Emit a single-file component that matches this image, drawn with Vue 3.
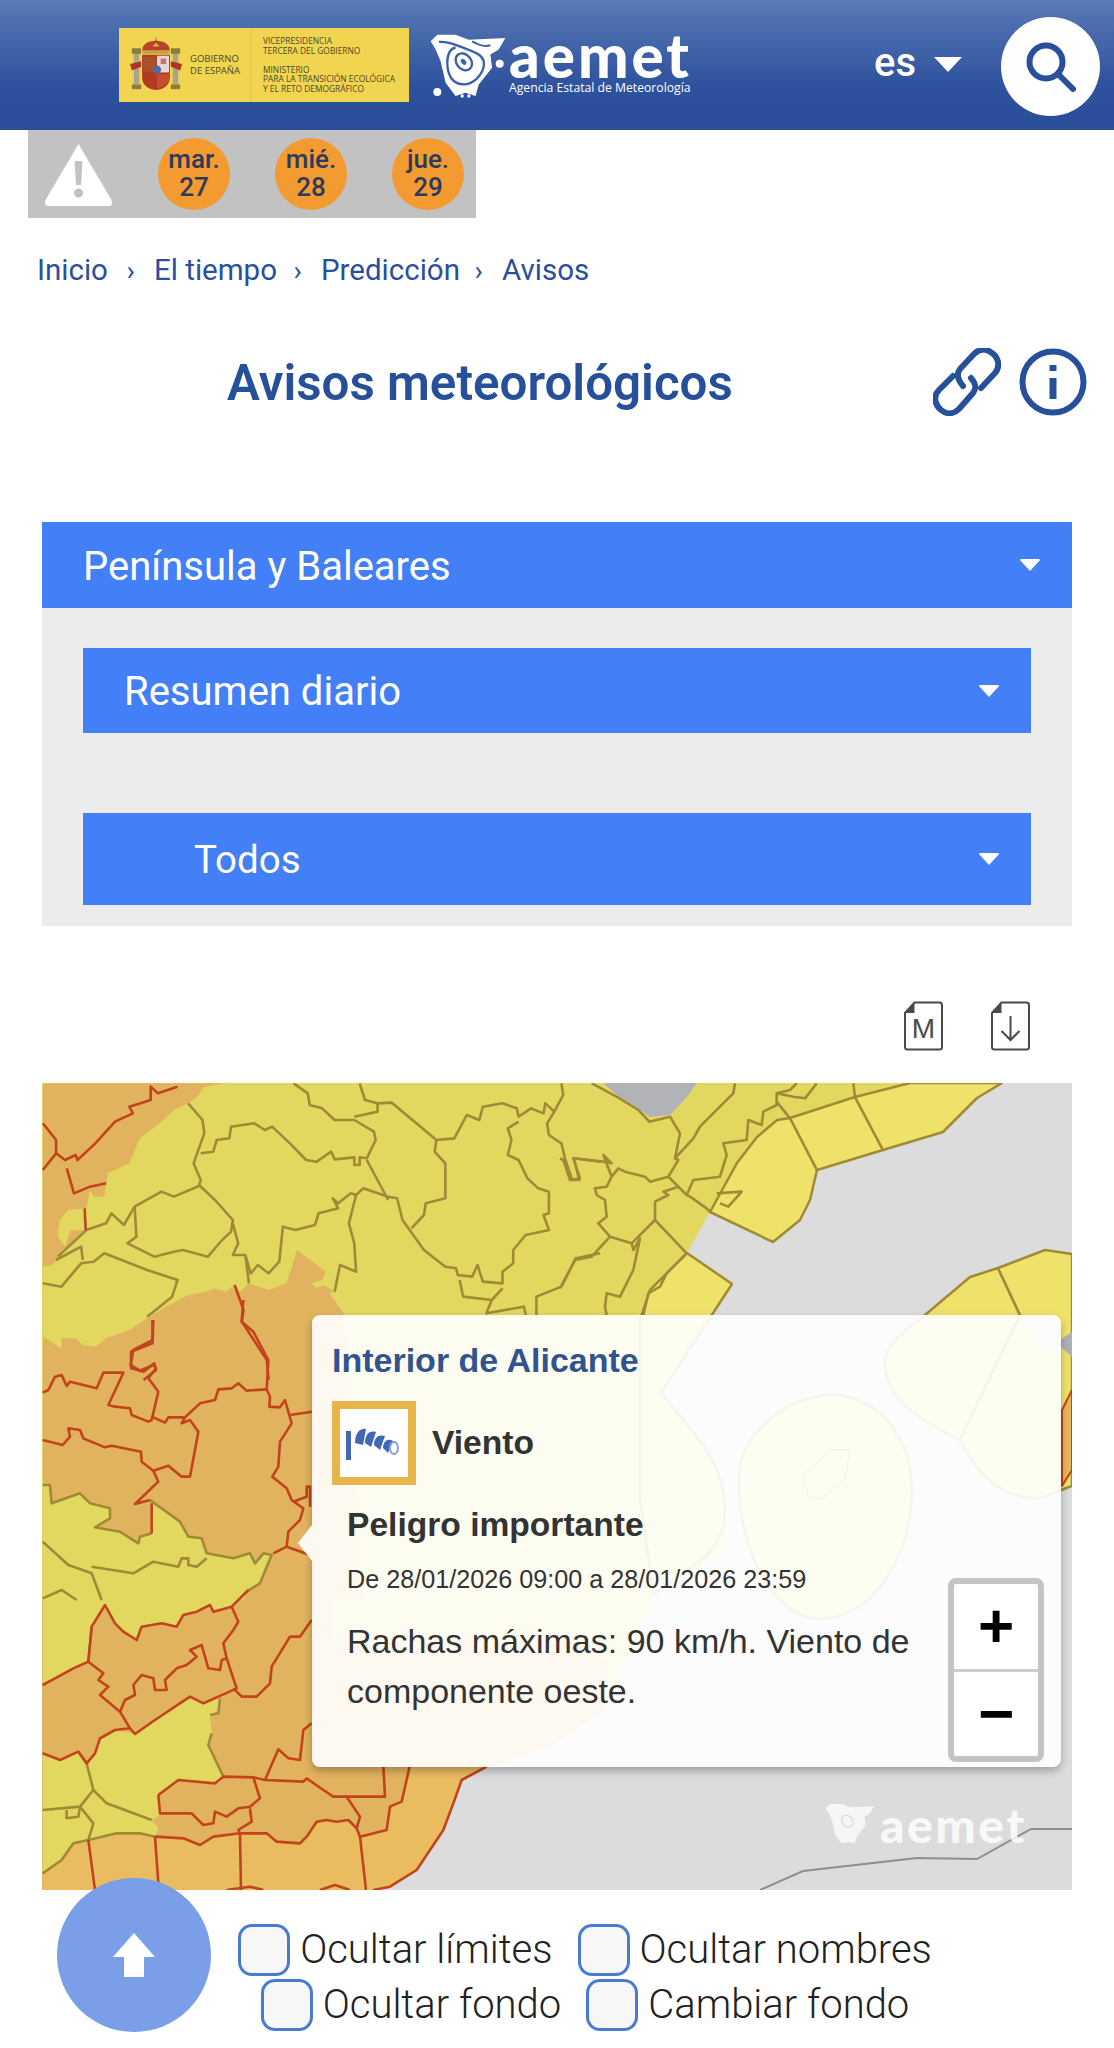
<script setup>
const days = [
  { d: 'mar.', n: '27' },
  { d: 'mié.', n: '28' },
  { d: 'jue.', n: '29' }
]
const crumbs = [
  { t: 'Inicio', w: 117 },
  { t: 'El tiempo', w: 167 },
  { t: 'Predicción', w: 181 },
  { t: 'Avisos', w: 90 }
]

// Map shapes, traced per reference crop. Each group has its own local coordinates.
const t8 = 'translate(40 1080) scale(0.35714 0.33333)'
const t9 = 'translate(560 1080) scale(0.33333)'
const t10 = 'translate(40 1300) scale(0.33333)'
const t11 = 'translate(40 1590) scale(0.33333)'

const orange8 = [
  '8,10 520,10 460,20 440,50 415,70 375,90 340,125 280,175 250,250 190,280 180,350 150,350 140,330 130,385 80,390 55,420 50,470 70,500 85,450 125,450 60,520 35,555 8,560',
  '8,770 60,805 60,775 100,775 120,795 155,800 185,775 250,750 300,715 345,685 415,645 465,635 490,625 520,635 545,615 560,635 585,610 640,630 690,610 720,510 800,575 790,600 760,610 775,625 795,615 825,635 810,640 850,700 900,1560 8,1560'
]
const red8 = [
  '8,130 45,180 45,220 8,270',
  '45,220 70,240 100,225 105,240 155,190 210,125 260,100 250,80 310,60 310,20 330,40 385,20',
  '75,265 95,340 140,320 185,310',
  '125,385 128,450',
  '315,720 315,790 255,815 255,865 290,875 320,850 325,870 290,900',
  '545,615 570,690 565,725 635,840 640,900'
]
const olive8 = [
  '450,220 485,215 495,180 530,175 535,140 600,130 630,150 650,140 700,190 745,240 775,245 815,215 825,238 880,232 880,255 895,255 895,232 915,235 940,180 935,155 880,120 825,120 790,85 755,75 750,40 710,10',
  '415,70 455,120 460,160 430,250 450,300 445,318 375,350 340,335 265,380 235,435 200,400 185,430 130,450 50,530',
  '265,380 270,470 245,490 320,530 375,515 400,510 470,530 510,480 535,455 540,420 490,360 445,315',
  '880,110 945,95 945,70 910,60 895,10',
  '945,70 985,68 1110,180 1160,175 1195,105 1230,120 1240,80 1295,70 1335,85 1340,110 1375,85 1410,100 1415,70 1440,95 1465,45 1460,10',
  '1440,95 1420,130 1425,165 1460,190 1470,235 1490,300 1510,300 1495,235 1568,245',
  '1340,125 1310,145 1320,180 1310,225 1340,240 1365,295 1395,325 1425,335 1425,400 1410,405 1425,450 1360,465 1325,510 1325,550 1295,575 1295,610 1240,605 1225,555 1210,590 1170,585 1165,565 1135,560 1075,510 1015,420 1000,355 975,350 905,325 885,345 870,340 835,370 820,355 835,385 780,400 770,435 715,450 680,440 670,545 640,580 610,555 590,580 575,525 540,525 555,490 540,430',
  '1110,180 1105,215 1135,250 1135,355 1080,370 1075,405 1040,445',
  '915,240 975,360',
  '885,345 865,430 880,490 885,575 840,555 825,635',
  '1175,600 1185,650 1265,660 1295,625',
  '1265,660 1250,700 1355,680 1360,705',
  '1390,705 1390,650 1460,620 1500,535 1568,520',
  '575,525 585,610',
  '8,610 60,620 115,550 150,545 180,520 300,570 385,600 370,650 300,710',
  '120,540 115,500 45,540'
]
const olive9 = [
  '95,10 170,50 235,90 268,125 330,110 360,160 345,235 355,240 325,290 270,305 255,290 195,275 175,265 155,290 140,320 105,325 110,345 135,360 140,410 115,430 150,470 215,490 220,510 240,475 220,570 180,650 140,640 135,680 140,705',
  '155,290 130,225 155,250 130,245 40,235 60,295 30,300 10,240 0,235',
  '150,470 95,530 45,540 0,625',
  '345,235 400,175 420,140 495,65 520,40 525,10',
  '325,290 355,320 380,345 390,350 440,385 450,395',
  '285,420 285,365 325,345 310,335 355,320',
  '285,420 215,490',
  '285,420 380,520 320,580 300,620 265,640 250,705',
  '380,345 400,300 480,290 500,225 490,190 560,180 565,120 605,135 610,95 650,75 650,40 690,30 710,10',
  '650,40 700,50 735,55 770,10',
  '880,10 885,50',
  '650,65 690,115',
  '470,340 545,335 505,380 480,370'
]
const yellow10 = '8,555 30,555 35,610 120,580 150,610 210,625 210,655 165,682 240,695 295,730 300,710 335,700 335,610 420,665 445,710 485,715 500,760 580,775 630,760 645,790 670,760 695,765 660,850 620,875 610,900 8,900'
const red10 = [
  '340,60 338,120 280,150 272,195 300,212 340,195 348,205 325,235 355,275 335,360 325,365 275,345 270,325 225,320 205,315 240,240 250,218 190,218 170,265 90,245 80,258 65,225 45,230 25,270 8,278',
  '335,350 375,368 385,352 435,352 425,370 450,360 475,395 450,530 425,530 385,497 340,512 305,485 303,455 215,437 195,442 130,415 120,390 85,385 90,410 68,435 8,420',
  '435,352 480,310 525,300 535,268 575,265 595,250 620,272 680,268 690,290 688,320 720,322 735,300 755,370 720,425 715,500 697,530 740,565 755,600 790,625 780,660 745,695 740,740 700,760',
  '610,0 605,65 640,95 685,180 680,268',
  '750,345 815,335',
  '340,512 355,545 285,612 330,600',
  '740,740 810,765',
  '760,605 800,590 800,560 810,560 810,620',
  '335,610 335,700'
]
const olive10 = [
  '8,555 30,555 35,610 120,580 150,610 210,625 210,655 165,682 240,695 295,730 300,710 335,700',
  '330,600 420,665 445,710 485,715 500,760 580,775 630,760 645,790 670,760 695,765 660,850 620,875',
  '8,725 85,795 155,820 185,900',
  '155,800 280,820 340,785 415,800 425,775 445,775 445,795 470,800 500,775',
  '8,895 65,870 110,900'
]
const yellow11 = [
  '8,0 625,0 575,50 520,65 510,45 470,65 430,75 410,110 365,100 305,110 290,150 250,125 225,100 195,45 155,110 145,215 100,235 45,265 8,285',
  '140,520 165,490 180,445 225,420 285,432 345,390 450,320 490,340 540,325 535,370 510,375 515,430 505,465 550,560 525,580 415,570 355,615 360,675 335,690 355,715 345,740 300,730 230,730 145,750 100,760 65,810 8,850 8,490 60,510 115,485'
]
const coast11 = '8,850 65,810 100,760 145,750 230,730 300,730 345,740 430,745 480,765 520,740 600,730 680,730 710,755 780,760 800,740 830,695 860,690 890,695 925,690 950,715 960,740 1040,720 1050,650 1085,635 1110,525 1340,530 1265,570 1240,640 1210,720 1130,840 1050,890 1000,900 8,900'
const red11 = [
  '8,285 45,265 100,235 145,215 190,250 175,270 205,290 180,315 240,365 270,415 225,420 180,445 165,490 140,520 115,485 60,510 8,490',
  '145,215 155,110 195,45 225,100 250,125 290,150 305,110 365,100 410,110 430,75 470,65 510,45 520,65 575,50 625,0',
  '240,365 255,330 285,315 280,285 305,255 340,265 345,300 380,300 375,270 410,235 440,225 470,200 450,180 485,165 505,235 540,240 545,210 560,205 550,160 580,120 595,95 575,50',
  '580,295 605,320 650,320 690,280 695,230 750,140 780,140 815,90',
  '270,415 285,432 345,390 450,320 490,340 590,295 560,205',
  '355,615 415,570 525,580 550,560 640,562 660,625 630,650 595,655 560,680 525,665 520,700 490,705 455,670 360,670 355,615',
  '630,655 635,695 595,720 600,730',
  '345,740 430,745 480,765 520,740 600,730 680,730 710,755 780,760 800,740 830,695 860,690 890,695 925,690 950,715 960,680 920,620 880,620 850,600 800,565 790,575 675,570 640,562',
  '675,570 715,478 740,500 745,505 780,510 790,420 815,400',
  '950,715 960,740 978,900',
  '960,740 1040,720 1050,650 1085,635 1110,525',
  '920,620 1035,620 1030,530',
  '600,730 603,900',
  '345,740 355,880',
  '145,750 165,900',
  '560,900 630,890 670,900',
  '840,900 885,885 930,900',
  '1340,530 1265,570 1240,640 1210,720 1130,840 1050,890 1000,900'
]
const olive11 = [
  '140,520 160,600 120,650 8,660',
  '160,600 200,640 335,690',
  '120,650 160,700 145,750 100,760 65,810 8,850',
  '80,660 80,685 115,680 120,650',
  '145,750 230,730 300,730 345,740',
  '140,520 115,485',
  '145,215 155,110',
  '510,375 535,370 540,325',
  '515,430 505,465 550,560'
]
</script>

<template>
  <div class="page">
    <header class="topbar">
      <div class="gov">
        <svg class="arms" viewBox="0 0 56 62" aria-hidden="true">
          <rect x="4" y="18" width="6" height="34" fill="#a9a58a" />
          <rect x="46" y="18" width="6" height="34" fill="#a9a58a" />
          <rect x="2" y="13" width="10" height="6" fill="#8d7c3c" />
          <rect x="44" y="13" width="10" height="6" fill="#8d7c3c" />
          <rect x="2" y="52" width="10" height="5" fill="#8d7c3c" />
          <rect x="44" y="52" width="10" height="5" fill="#8d7c3c" />
          <path d="M0 30 L12 27 L12 33 L2 37Z M56 30 L44 27 L44 33 L54 37Z" fill="#b2331f" />
          <path d="M28 0 L29.500 7 L27 7Z" fill="#8d7c3c" />
          <path d="M14 18 C11 9 20 5 28 5 C36 5 45 9 42 18Z" fill="#b9402a" />
          <rect x="14" y="15" width="28" height="4" fill="#c7a23c" />
          <path d="M13 20 H43 V44 C43 54 34 58 28 58 C22 58 13 54 13 44Z" fill="#b33a22" />
          <rect x="29" y="21" width="13" height="18" fill="#e6d9d4" />
          <rect x="14" y="22" width="13" height="16" fill="#a8522b" />
          <path d="M29 41 H42 V45 C42 51 36 55 29 56Z" fill="#c4502e" />
          <circle cx="29" cy="36" r="4.500" fill="#4d6aa8" />
          <rect x="33" y="24" width="6" height="6" fill="#c8707c" />
          <path d="M24 11 L28 7 L32 11Z" fill="#d8b448" />
        </svg>
        <div class="gov-name">GOBIERNO<br />DE ESPAÑA</div>
        <div class="gov-rule"></div>
        <div class="gov-min">
          <div>VICEPRESIDENCIA</div>
          <div>TERCERA DEL GOBIERNO</div>
          <div class="gov-gap">MINISTERIO</div>
          <div>PARA LA TRANSICIÓN ECOLÓGICA</div>
          <div>Y EL RETO DEMOGRÁFICO</div>
        </div>
      </div>
      <div class="brand">
        <svg class="brand-mark" viewBox="920 25 235 205" aria-hidden="true">
          <path d="M925 50 L945 30 L1000 30 L1040 45 L1150 40 L1130 75 L1105 90 L1110 130 L1070 180 L1060 215 L1030 205 L1000 215 L970 175 L955 110 L940 75Z" fill="#fff" />
          <path d="M950 52 C985 50 1000 62 1030 72 C1065 85 1090 95 1085 125 C1080 155 1050 180 1025 180 C990 180 975 150 975 115 C975 85 985 72 1000 68" fill="none" stroke="#3a60a8" stroke-width="7" />
          <ellipse cx="1025" cy="112" rx="22" ry="28" transform="rotate(-40 1025 112)" fill="none" stroke="#3a60a8" stroke-width="7" />
          <ellipse cx="1024" cy="112" rx="7" ry="10" transform="rotate(-40 1024 112)" fill="#3a60a8" />
          <path d="M1050 50 C1070 60 1085 68 1105 62" fill="none" stroke="#3a60a8" stroke-width="6" />
          <circle cx="1133" cy="118" r="12" fill="#fff" />
          <circle cx="945" cy="203" r="12" fill="#fff" />
          <circle cx="1020" cy="215" r="5" fill="#fff" />
          <circle cx="1040" cy="215" r="5" fill="#fff" />
        </svg>
        <div class="brand-text">
          <div class="brand-word">aemet</div>
          <div class="brand-sub">Agencia Estatal de Meteorología</div>
        </div>
      </div>
      <div class="lang">
        <span>es</span>
        <i class="lang-caret"></i>
      </div>
      <button class="search" aria-label="Buscar">
        <svg viewBox="0 0 50 50" width="50" height="50" fill="none" stroke="#2a4f9c" stroke-width="6">
          <circle cx="20" cy="20" r="16.500" />
          <path d="M32 32 L47 47" stroke-linecap="round" />
        </svg>
      </button>
    </header>

    <div class="alerts">
      <svg class="alert-icon" viewBox="0 0 72 66" aria-hidden="true">
        <path d="M36 3 L69 59 Q71 65 66 65 H6 Q1 65 3 59Z" fill="#fff" />
        <path d="M32 20 H40 L38.500 44 H33.500Z" fill="#c2c2c2" />
        <circle cx="36" cy="52" r="4.500" fill="#c2c2c2" />
      </svg>
      <div v-for="day in days" :key="day.d" class="day">
        <span>{{ day.d }}</span>
        <span>{{ day.n }}</span>
      </div>
    </div>

    <nav class="crumbs">
      <span v-for="(c, i) in crumbs" :key="c.t" class="crumb" :style="{ width: c.w + 'px' }">
        <span>{{ c.t }}</span>
        <span v-if="i < crumbs.length - 1" class="crumb-sep">›</span>
      </span>
    </nav>

    <div class="title-row">
      <h1>Avisos meteorológicos</h1>
      <svg class="tool link-tool" viewBox="0 0 68 68" aria-hidden="true" fill="none" stroke="#27509b" stroke-width="6" stroke-linecap="round" stroke-linejoin="round">
        <path d="M20 28 L6 42 C-1 49 3 58 8 62 C13 66 20 67 26 61 L40 45 C43 41 44 37 38 30" />
        <path d="M48 40 L62 25 C68 18 65 9 59 5 C53 0 46 1 41 6 L27 21 C23 26 25 32 30 38" />
      </svg>
      <svg class="tool" viewBox="0 0 68 68" aria-hidden="true">
        <circle cx="34" cy="34" r="30.500" fill="none" stroke="#27509b" stroke-width="6" />
        <rect x="30.500" y="17" width="7" height="6" fill="#27509b" />
        <rect x="30.500" y="30" width="7" height="21" fill="#27509b" />
      </svg>
    </div>

    <section class="accordion">
      <div class="acc-head">
        <span>Península y Baleares</span>
        <i class="caret"></i>
      </div>
      <div class="acc-body">
        <div class="acc-head acc-sub">
          <span>Resumen diario</span>
          <i class="caret"></i>
        </div>
        <div class="acc-head acc-sel">
          <span>Todos</span>
          <i class="caret"></i>
        </div>
      </div>
    </section>

    <div class="files">
      <svg class="file" viewBox="0 0 40 50" aria-hidden="true">
        <path d="M11 1.500 H36 Q38.500 1.500 38.500 4 V46 Q38.500 48.500 36 48.500 H4 Q1.500 48.500 1.500 46 V12Z" fill="#fff" stroke="#4a4a4a" stroke-width="2" />
        <path d="M11 1 L1 12 H11Z" fill="#4a4a4a" />
        <text x="20" y="37" text-anchor="middle" class="file-m">M</text>
      </svg>
      <svg class="file" viewBox="0 0 40 50" aria-hidden="true">
        <path d="M11 1.500 H36 Q38.500 1.500 38.500 4 V46 Q38.500 48.500 36 48.500 H4 Q1.500 48.500 1.500 46 V12Z" fill="#fff" stroke="#4a4a4a" stroke-width="2" />
        <path d="M11 1 L1 12 H11Z" fill="#4a4a4a" />
        <path d="M20 15 V39 M11 30 L20 39 L29 30" fill="none" stroke="#4a4a4a" stroke-width="2" />
      </svg>
    </div>

    <div class="map">
      <svg class="map-svg" viewBox="42 1083 1030 807" aria-hidden="true">
        <rect x="42" y="1083" width="1030" height="807" fill="#dcdcdd" />
        <polygon points="42,1083 910,1083 855,1097 790,1118 777,1120 757,1137 737,1163 757,1178 742,1192 710,1212 687,1253 640,1320 661,1393 725,1491 725,1550 654,1594 604,1711 554,1745 497,1765 487,1767 462,1780 453,1803 443,1830 417,1870 390,1887 373,1890 42,1890" fill="#e2d860" />
        <polygon points="603,1083 697,1083 687,1097 670,1115 650,1117 637,1108 617,1095" fill="#b2b3b7" />
        <g fill="#efe26b" stroke="#a08a35" stroke-width="2.500" stroke-linejoin="round">
          <polygon points="777,1120 790,1118 817,1170 810,1200 800,1220 773,1242 710,1212 737,1163 757,1137" />
          <polygon points="790,1118 855,1097 883,1150 817,1170" />
          <polygon points="855,1097 910,1083 1002,1083 977,1098 943,1132 883,1150" />
          <path d="M687 1253 L732 1284 L661 1393 C690 1430 725 1460 725 1510 C725 1560 680 1570 654 1594 L640 1500 L640 1320 L650 1290Z" />
          <path d="M925 1315 L970 1277 L998 1268 L1020 1315 L960 1440 C920 1420 885 1400 885 1363 C885 1345 905 1330 925 1315Z" />
          <path d="M998 1268 L1045 1250 L1072 1254 V1486 L1040 1498 C1000 1500 975 1470 960 1440 L1020 1315Z" />
          <path d="M739 1470 C745 1430 790 1395 831 1395 C880 1395 912 1440 912 1490 C912 1560 870 1619 820 1619 C770 1619 735 1540 739 1470Z" />
        </g>
        <polygon points="1024,1320 1059,1320 1059,1353 1040,1350" fill="#d4d5d8" />
        <polygon points="1060,1340 1072,1332 1072,1357 1060,1346" fill="#aeb0b4" />
        <polygon points="1072,1390 1062,1410 1062,1486 1072,1470" fill="#e6b55c" stroke="#c2431c" stroke-width="2" />
        <polygon points="803,1476 830,1450 850,1450 845,1480 820,1500 808,1495" fill="#efe26b" stroke="#a08a35" stroke-width="1.500" />

        <g :transform="t8" class="zone-orange">
          <polygon v-for="p in orange8" :key="p" :points="p" />
        </g>
        <polygon points="330,1640 604,1640 604,1711 554,1745 497,1765 487,1767 462,1780 453,1803 443,1830 417,1870 390,1887 373,1890 42,1890 42,1600 330,1600" fill="#e2b35f" />
        <polygon :transform="t10" :points="yellow10" fill="#e2d860" />
        <polygon v-for="p in yellow11" :key="p" :transform="t11" :points="p" fill="#e2d860" />
        <polygon :transform="t11" :points="coast11" fill="#e9bc60" />

        <g :transform="t8">
          <polyline v-for="p in olive8" :key="p" :points="p" class="line-olive" />
          <polyline v-for="p in red8" :key="p" :points="p" class="line-red" />
        </g>
        <g :transform="t9">
          <polyline v-for="p in olive9" :key="p" :points="p" class="line-olive" />
        </g>
        <g :transform="t10">
          <polyline v-for="p in olive10" :key="p" :points="p" class="line-olive" />
          <polyline v-for="p in red10" :key="p" :points="p" class="line-red" />
        </g>
        <g :transform="t11">
          <polyline v-for="p in olive11" :key="p" :points="p" class="line-olive" />
          <polyline v-for="p in red11" :key="p" :points="p" class="line-red" />
        </g>
        <polyline points="760,1890 803,1871 917,1858 977,1859 1031,1829 1072,1829" fill="none" stroke="#8f8f90" stroke-width="2" />
      </svg>

      <div class="watermark">
        <svg viewBox="920 25 235 205" width="52" height="44" aria-hidden="true">
          <path d="M925 50 L945 30 L1000 30 L1040 45 L1150 40 L1130 75 L1105 90 L1110 130 L1070 180 L1060 215 L1030 205 L1000 215 L970 175 L955 110 L940 75Z" fill="#fff" opacity=".75" />
          <ellipse cx="1025" cy="110" rx="24" ry="30" transform="rotate(-40 1025 110)" fill="none" stroke="#dcdcdd" stroke-width="6" />
        </svg>
        <span>aemet</span>
      </div>

      <div class="popup">
        <i class="popup-tail"></i>
        <div class="popup-title">Interior de Alicante</div>
        <div class="popup-kind">
          <div class="kind-box">
            <svg viewBox="0 0 56 40" width="56" height="40" aria-hidden="true">
              <rect x="0" y="8" width="5" height="29" fill="#4268b4" />
              <path d="M9 20 C9 10 14 5 20 6 L17 22Z" fill="#4268b4" />
              <path d="M19 20 C19 12 23 7 30 9 L25 24Z" fill="#4268b4" />
              <path d="M28 22 C28 14 33 11 39 13 L34 27Z" fill="#4268b4" />
              <path d="M37 25 C37 18 42 15 47 18 L42 30Z" fill="#4268b4" />
              <ellipse cx="48" cy="25" rx="4" ry="6" fill="none" stroke="#8aa2d4" stroke-width="2" />
            </svg>
          </div>
          <b>Viento</b>
        </div>
        <div class="popup-text">
          <div class="popup-level">Peligro importante</div>
          <div class="popup-date">De 28/01/2026 09:00 a 28/01/2026 23:59</div>
          <div class="popup-desc">Rachas máximas: 90 km/h. Viento de componente oeste.</div>
        </div>
        <div class="zoom">
          <button>+</button>
          <button>−</button>
        </div>
      </div>
    </div>

    <div class="controls">
      <button class="to-top" aria-label="Subir">
        <svg viewBox="0 0 44 44" width="44" height="44" aria-hidden="true">
          <path d="M22 0 L43 24 H32 V44 H12 V24 H1Z" fill="#fff" />
        </svg>
      </button>
      <div class="checks">
        <div class="check-row">
          <label class="check"><i></i>Ocultar límites</label>
          <label class="check"><i></i>Ocultar nombres</label>
        </div>
        <div class="check-row">
          <label class="check"><i></i>Ocultar fondo</label>
          <label class="check"><i></i>Cambiar fondo</label>
        </div>
      </div>
    </div>
  </div>
</template>

<style scoped>
.page {
  width: 1114px;
  height: 2048px;
  overflow: hidden;
  position: relative;
  background: #fff;
  font-family: Roboto, "Liberation Sans", sans-serif;
}
.topbar {
  height: 130px;
  box-sizing: border-box;
  display: flex;
  align-items: flex-start;
  padding-left: 119px;
  background: linear-gradient(#5d7bb8 0, #4f70b0 14%, #2e529d 66%, #2a4d9a 100%);
}
.gov {
  width: 290px;
  height: 74px;
  margin-top: 28px;
  background: #f1d44f;
  display: flex;
  align-items: center;
  color: #4d4a2a;
  font-family: "Open Sans", sans-serif;
}
.arms {
  width: 52px;
  height: 58px;
  margin-left: 11px;
  flex: none;
}
.gov-name {
  margin-left: 8px;
  width: 59px;
  font-size: 9.500px;
  line-height: 12px;
  flex: none;
  white-space: nowrap;
}
.gov-rule {
  width: 1px;
  height: 74px;
  background: #e2c64a;
  margin-left: 1px;
  flex: none;
}
.gov-min {
  margin-left: 12px;
  font-size: 8.400px;
  line-height: 9.700px;
  white-space: nowrap;
}
.gov-gap {
  margin-top: 9px;
}
.brand {
  display: flex;
  margin-left: 19px;
  margin-top: 33px;
  color: #fff;
}
.brand-mark {
  width: 80px;
  height: 68px;
  flex: none;
}
.brand-text {
  margin-left: 1px;
  width: 183px;
}
.brand-word {
  font-family: Lato, sans-serif;
  font-weight: 900;
  font-size: 60px;
  line-height: 44px;
  letter-spacing: 3px;
  white-space: nowrap;
}
.brand-sub {
  font-family: "Open Sans", sans-serif;
  font-size: 12.200px;
  line-height: 14px;
  margin-top: 4px;
  white-space: nowrap;
}
.lang {
  display: flex;
  align-items: center;
  margin-left: 182px;
  margin-top: 38px;
  color: #fff;
  font-size: 40px;
  font-weight: 500;
  line-height: 50px;
}
.lang-caret {
  width: 0;
  height: 0;
  margin-left: 18px;
  margin-top: 3px;
  border-left: 14px solid transparent;
  border-right: 14px solid transparent;
  border-top: 15px solid #fff;
}
.search {
  width: 99px;
  height: 99px;
  margin-left: 39px;
  margin-top: 17px;
  padding: 0;
  border: 0;
  border-radius: 50%;
  background: #fff;
  display: flex;
  align-items: center;
  justify-content: center;
}
.alerts {
  width: 448px;
  height: 88px;
  margin-left: 28px;
  background: #c2c2c2;
  display: flex;
  align-items: center;
  box-sizing: border-box;
  padding-left: 14px;
}
.alert-icon {
  width: 73px;
  height: 66px;
  flex: none;
  margin-right: 43px;
}
.day {
  width: 72px;
  height: 72px;
  margin-right: 45px;
  border-radius: 50%;
  background: #f39a30;
  color: #2c3a5e;
  font-size: 26px;
  font-weight: 500;
  line-height: 28px;
  padding-bottom: 2px;
  box-sizing: border-box;
  flex: none;
  display: flex;
  flex-direction: column;
  align-items: center;
  justify-content: center;
}
.crumbs {
  display: flex;
  margin-top: 32px;
  margin-left: 37px;
  height: 40px;
  align-items: center;
  color: #2a4f9c;
  font-size: 29.500px;
  white-space: nowrap;
}
.crumb {
  display: flex;
  justify-content: space-between;
  align-items: center;
  box-sizing: border-box;
  padding-right: 19px;
  flex: none;
}
.crumb-sep {
  font-size: 28px;
}
.title-row {
  display: flex;
  align-items: center;
  height: 68px;
  margin-top: 58px;
  padding-left: 227px;
}
h1 {
  margin: 0;
  width: 706px;
  flex: none;
  font-size: 49.300px;
  line-height: 68px;
  padding-top: 2px;
  box-sizing: border-box;
  font-weight: 600;
  color: #27509b;
  white-space: nowrap;
}
.tool {
  width: 68px;
  height: 68px;
  flex: none;
}
.link-tool {
  margin-right: 18px;
}
.accordion {
  margin: 106px 42px 0;
  width: 1030px;
  background: #ececed;
}
.acc-head {
  height: 86px;
  background: #437ff6;
  color: #fff;
  font-size: 40px;
  display: flex;
  align-items: center;
  justify-content: space-between;
  padding: 0 31px 0 41px;
}
.acc-head span {
  margin-top: 2px;
}
.acc-body {
  height: 318px;
  padding: 40px 41px 0;
  box-sizing: border-box;
}
.acc-sub {
  height: 85px;
  padding-left: 41px;
  padding-right: 31px;
}
.acc-sel {
  height: 92px;
  margin-top: 80px;
  padding-left: 111px;
  padding-right: 31px;
}
.acc-sel span {
  margin-top: 0;
  font-size: 38.500px;
}
.caret {
  width: 0;
  height: 0;
  border-left: 11px solid transparent;
  border-right: 11px solid transparent;
  border-top: 12px solid #fff;
  flex: none;
  border-radius: 3px;
}
.files {
  display: flex;
  justify-content: flex-end;
  gap: 46px;
  margin-top: 75px;
  padding-right: 83px;
  height: 50px;
}
.file {
  width: 41px;
  height: 50px;
  flex: none;
}
.file-m {
  font-family: "Liberation Sans", sans-serif;
  font-size: 28px;
  fill: #4a4a4a;
}
.map {
  position: relative;
  width: 1030px;
  height: 807px;
  margin: 32px 0 0 42px;
}
.map-svg {
  display: block;
  width: 1030px;
  height: 807px;
}
.map-svg polygon {
  stroke-linejoin: round;
}
.zone-orange polygon {
  fill: #e2b35f;
}
.line-olive,
.line-red {
  fill: none;
  vector-effect: non-scaling-stroke;
  stroke-linejoin: round;
}
.line-olive {
  stroke: #a08a35;
  stroke-width: 2.600px;
}
.line-red {
  stroke: #c2431c;
  stroke-width: 2.600px;
}
.watermark {
  position: absolute;
  left: 782px;
  top: 720px;
  display: flex;
  align-items: center;
  gap: 4px;
  color: rgba(255, 255, 255, 0.82);
  font-family: Lato, sans-serif;
  font-weight: 900;
  font-size: 48px;
  letter-spacing: 2.500px;
  line-height: 44px;
  white-space: nowrap;
}
.popup {
  position: absolute;
  left: 270px;
  top: 232px;
  width: 749px;
  height: 452px;
  box-sizing: border-box;
  padding: 25px 20px 27px;
  border-radius: 8px;
  background: rgba(255, 255, 255, 0.91);
  box-shadow: 0 4px 8px rgba(0, 0, 0, 0.28);
  font-family: "Liberation Sans", Arial, sans-serif;
  color: #333;
}
.popup-tail {
  position: absolute;
  left: -14px;
  top: 210px;
  width: 14px;
  height: 36px;
  background: rgba(255, 255, 255, 0.92);
  clip-path: polygon(100% 0, 100% 100%, 0 50%);
}
.popup-title {
  font-size: 34px;
  font-weight: 700;
  line-height: 40px;
  color: #315390;
  white-space: nowrap;
}
.popup-kind {
  display: flex;
  align-items: center;
  margin-top: 21px;
  font-size: 33.600px;
}
.kind-box {
  width: 84px;
  height: 84px;
  box-sizing: border-box;
  border: 8px solid #e8b54a;
  background: #fff;
  display: flex;
  align-items: flex-start;
  justify-content: center;
  padding-top: 14px;
  margin-right: 16px;
}
.popup-text {
  padding-left: 15px;
}
.popup-level {
  margin-top: 20px;
  font-size: 33.600px;
  font-weight: 700;
  line-height: 40px;
}
.popup-date {
  margin-top: 19px;
  font-size: 25.200px;
  line-height: 30px;
  white-space: nowrap;
}
.popup-desc {
  margin-top: 22px;
  width: 600px;
  font-size: 34px;
  line-height: 50.400px;
}
.zoom {
  position: absolute;
  left: 636px;
  top: 263px;
  width: 96px;
  height: 184px;
  box-sizing: border-box;
  border: 6px solid #c4c4c4;
  border-radius: 8px;
  background: #fff;
  display: flex;
  flex-direction: column;
}
.zoom button {
  flex: 1;
  padding: 0;
  border: 0;
  background: none;
  color: #000;
  font-family: "Liberation Sans", sans-serif;
  font-size: 62px;
  font-weight: 700;
  line-height: 1;
}
.zoom button:first-child {
  border-bottom: 3px solid #ccc;
}
.controls {
  position: relative;
  height: 158px;
}
.to-top {
  position: absolute;
  left: 57px;
  top: -12px;
  width: 154px;
  height: 154px;
  padding: 0;
  border: 0;
  border-radius: 50%;
  background: #7a9fe8;
  display: flex;
  align-items: center;
  justify-content: center;
}
.checks {
  position: absolute;
  left: 185px;
  top: 34px;
  width: 800px;
  display: flex;
  flex-direction: column;
  gap: 3px;
}
.check-row {
  display: flex;
  justify-content: center;
  gap: 25px;
}
.check {
  display: flex;
  align-items: center;
  gap: 10px;
  height: 52px;
  font-size: 40px;
  font-weight: 300;
  line-height: 48px;
  color: #222;
  white-space: nowrap;
}
.check i {
  width: 52px;
  height: 52px;
  box-sizing: border-box;
  border: 3px solid #4a7bd0;
  border-radius: 14px;
  background: #f7f7f7;
  flex: none;
}
</style>
<style>
html, body {
  margin: 0;
  background: #fff;
}
</style>
